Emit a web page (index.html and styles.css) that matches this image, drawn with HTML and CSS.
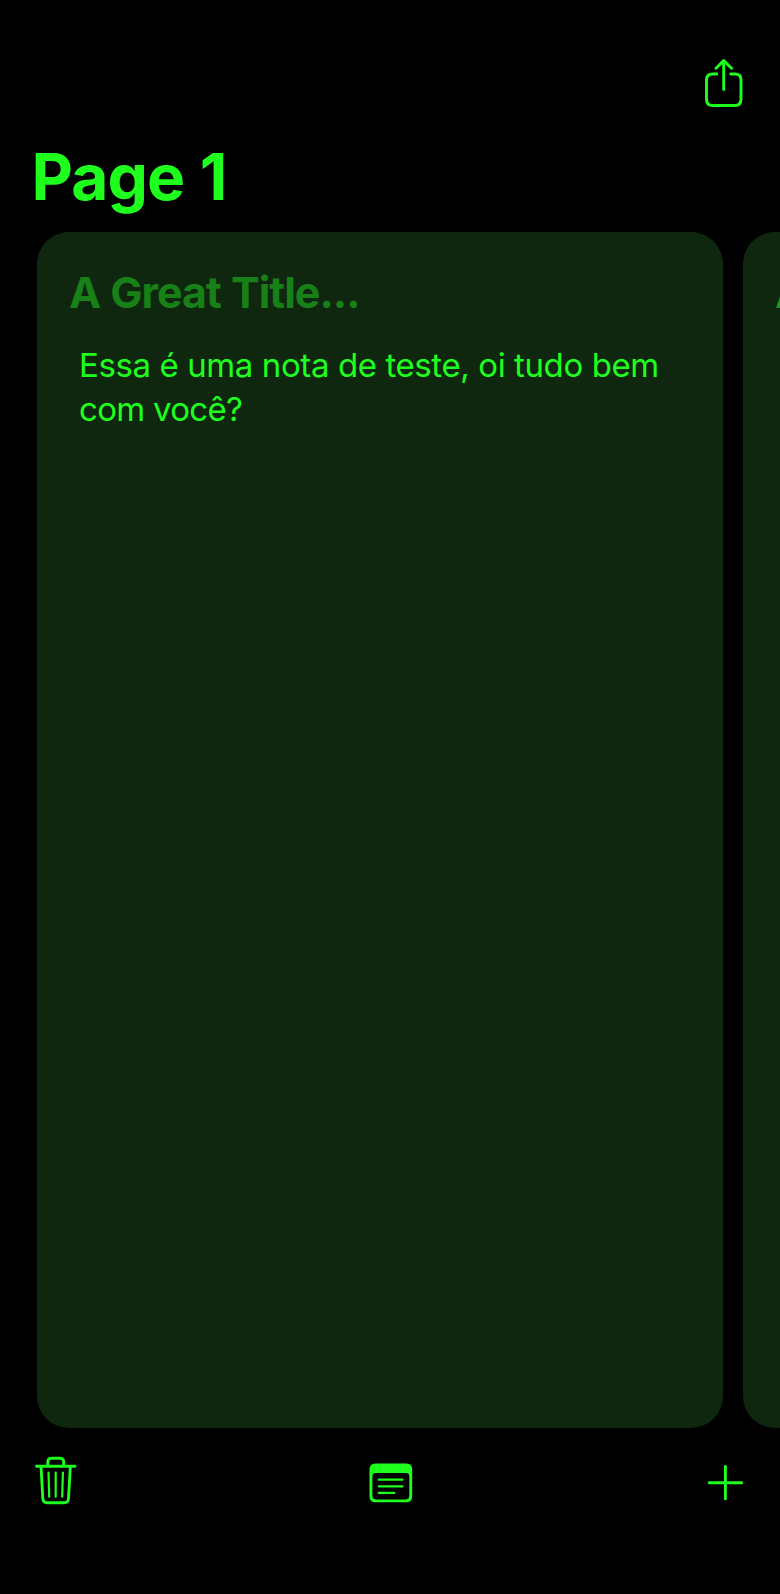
FILE: index.html
```
<!DOCTYPE html>
<html lang="pt">
<head>
<meta charset="utf-8">
<title>Notes</title>
<link rel="stylesheet" href="styles.css">
</head>
<body>
<div class="app">
  <header class="navbar">
    <svg class="icon" width="40" height="50" viewBox="0 0 40 50" aria-label="Share">
      <path d="M12.8 15H8.5Q2.5 15 2.5 21V40.3Q2.5 46.5 8.5 46.5H31Q37 46.5 37 40.3V21Q37 15 31 15H26.7M19.7 30.5V2.2M12 9.3L19.7 1.6L27.5 9.3"/>
    </svg>
  </header>
  <h1 class="page-title">Page 1</h1>
  <main class="pages">
    <article class="card">
      <h2 class="card-title">A Great Title...</h2>
      <p class="card-text"><span class="line-one">Essa é uma nota de teste, oi tudo bem</span><br><span class="line-two">com você?</span></p>
    </article>
    <article class="card">
      <h2 class="card-title next">A Great Title...</h2>
    </article>
  </main>
  <footer class="toolbar">
    <svg class="icon" width="42" height="50" viewBox="0 0 42 50" aria-label="Delete">
      <path d="M1.5 10.2H40M12.8 9.2V6Q12.8 2.3 16.8 2.3H24.7Q28.7 2.3 28.7 6V9.2M6.1 11.5L7.8 42.5Q8.1 46.7 12.1 46.7H29.2Q33.2 46.7 33.5 42.5L35.3 11.5"/>
      <path class="fine" d="M13.5 16.5L14.2 40.7M20.7 16.5V40.7M27.9 16.5L27.2 40.7"/>
    </svg>
    <svg class="icon" width="44" height="40" viewBox="0 0 44 40" aria-label="Pages">
      <path class="solid" fill-rule="evenodd" d="M6.5 0.5H37.2Q43.2 0.5 43.2 6.5V33.3Q43.2 39.3 37.2 39.3H6.5Q0.5 39.3 0.5 33.3V6.5Q0.5 0.5 6.5 0.5ZM6.8 10Q3.4 10 3.4 13.2V33.1Q3.4 36.4 6.8 36.4H36.9Q40.3 36.4 40.3 33.1V13.2Q40.3 10 36.9 10Z"/>
      <path class="fine" d="M9.8 16.6H33.5M9.8 23.3H33.5M9.8 29.9H25.3"/>
    </svg>
    <svg class="icon" width="36" height="36" viewBox="0 0 36 36" aria-label="Add">
      <path d="M18.4 1.5V33.9M2.2 17.7H34.6"/>
    </svg>
  </footer>
</div>
</body>
</html>
```
FILE: styles.css
```
* { box-sizing: border-box; }
body {
  margin: 0;
  background: #000;
  color: #1eff1e;
  font-family: Inter, "Liberation Sans", sans-serif;
}
.app {
  width: 780px;
  height: 1594px;
  display: flex;
  flex-direction: column;
  overflow: hidden;
}
.navbar {
  height: 138px;
  padding: 59px 36px 0 0;
  display: flex;
  justify-content: flex-end;
}
.icon {
  display: block;
  flex: none;
  fill: none;
  stroke: #1eff1e;
  stroke-width: 2.9;
  stroke-linecap: round;
  stroke-linejoin: round;
}
.icon .fine { stroke-width: 2.2; }
.icon .solid { fill: #1eff1e; stroke: none; }
.page-title {
  height: 94px;
  margin: 0;
  padding-left: 31.5px;
  font-size: 64px;
  line-height: 77px;
  font-weight: 700;
  letter-spacing: -0.9px;
  word-spacing: 1.2px;
}
.pages {
  height: 1196px;
  padding-left: 37px;
  display: flex;
  gap: 20px;
}
.card {
  flex: 0 0 686px;
  padding: 34px 32px;
  border-radius: 32px;
  background: #0f260f;
}
.card-title {
  margin: 0;
  color: #178017;
  font-size: 43px;
  line-height: 52px;
  font-weight: 700;
  letter-spacing: -1px;
  word-spacing: 1px;
  white-space: nowrap;
}
.card-title.next { color: #1a961a; }
.card-text {
  margin: 25px 0 0;
  padding-left: 10px;
  font-size: 33px;
  line-height: 44px;
  white-space: nowrap;
}
.line-one { letter-spacing: -0.4px; }
.line-two { letter-spacing: -0.7px; }
.toolbar {
  height: 107px;
  padding: 0 37px 0 34.5px;
  display: flex;
  align-items: center;
  justify-content: space-between;
}
.toolbar .icon:nth-child(1) {
  margin-bottom: 2px;
}
.toolbar .icon:nth-child(2) {
  margin: 2px 2px 0 0;
}
.toolbar .icon:nth-child(3) {
  margin-top: 2px;
}
```
